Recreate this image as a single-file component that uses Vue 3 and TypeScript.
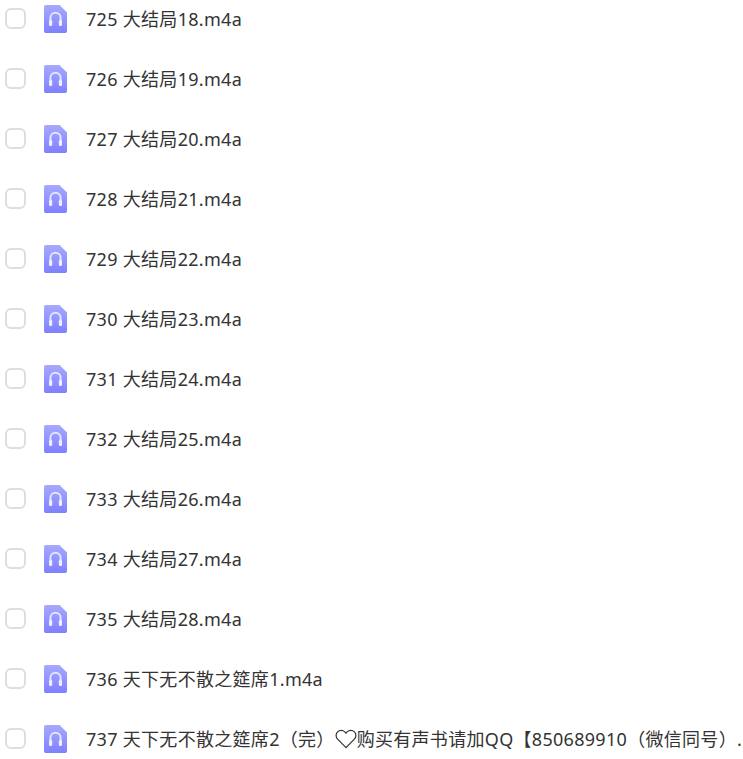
<script setup lang="ts">
const rows: string[] = [
  '725 大结局18.m4a',
  '726 大结局19.m4a',
  '727 大结局20.m4a',
  '728 大结局21.m4a',
  '729 大结局22.m4a',
  '730 大结局23.m4a',
  '731 大结局24.m4a',
  '732 大结局25.m4a',
  '733 大结局26.m4a',
  '734 大结局27.m4a',
  '735 大结局28.m4a',
  '736 天下无不散之筵席1.m4a',
  '737 天下无不散之筵席2（完）♡购买有声书请加QQ【850689910（微信同号）...'
]

// the heart in the last name is wider than the font's glyph, so it gets its own svg
const parts = (name: string) => name.split('♡')
</script>

<template>
  <div class="page">
    <ul class="list">
      <li v-for="name in rows" :key="name" class="row">
        <span class="check"></span>
        <svg class="file" width="23" height="28" viewBox="0 0 23 28">
          <defs>
            <linearGradient id="fileFill" x1="0" y1="0" x2="0" y2="1">
              <stop offset="0" stop-color="#a6a9ff" />
              <stop offset="1" stop-color="#7f80ff" />
            </linearGradient>
          </defs>
          <path d="M1.8 0H15.5L23 7.5V26.2A1.8 1.8 0 0 1 21.2 28H1.8A1.8 1.8 0 0 1 0 26.2V1.8A1.8 1.8 0 0 1 1.8 0Z" fill="url(#fileFill)" />
          <path d="M6.4 17v-4.2a5.1 5.1 0 0 1 10.2 0V17" fill="none" stroke="#e4e5ff" stroke-width="2" />
          <rect x="5" y="15" width="3.2" height="6" rx="1.3" fill="#eeeeff" />
          <rect x="14.8" y="15" width="3.2" height="6" rx="1.3" fill="#eeeeff" />
        </svg>
        <span class="name">
          <template v-for="(part, i) in parts(name)" :key="i">
            <svg v-if="i > 0" class="heart" width="22" height="20" viewBox="0 0 22 20">
              <path d="M11 18.6 2.6 10.2a5.2 5.2 0 0 1 0-7.3 5.1 5.1 0 0 1 7.2 0L11 4.1l1.2-1.2a5.1 5.1 0 0 1 7.2 0 5.2 5.2 0 0 1 0 7.3Z" fill="none" stroke="#333" stroke-width="1.2" />
            </svg>{{ part }}
          </template>
        </span>
      </li>
    </ul>
  </div>
</template>

<style>
html,
body {
  margin: 0;
  background: #fff;
  overflow: hidden;
}
</style>

<style scoped>
.page {
  width: 743px;
  height: 759px;
  overflow: hidden;
}

.list {
  list-style: none;
  margin: -11px 0 0;
  padding: 0 0 0 5px;
}

.row {
  display: flex;
  align-items: center;
  height: 60px;
}

.check {
  flex: none;
  width: 21px;
  height: 21px;
  margin-top: -1px;
  box-sizing: border-box;
  border: 2px solid #dedede;
  border-radius: 6px;
}

.file {
  flex: none;
  margin-left: 18px;
}

.name {
  margin-left: 19px;
  padding-bottom: 2px;
  font-family: "Noto Sans", "Noto Sans CJK SC", sans-serif;
  font-size: 18px;
  letter-spacing: 0.3px;
  color: #333;
  white-space: nowrap;
}

.heart {
  vertical-align: -3px;
}
</style>
